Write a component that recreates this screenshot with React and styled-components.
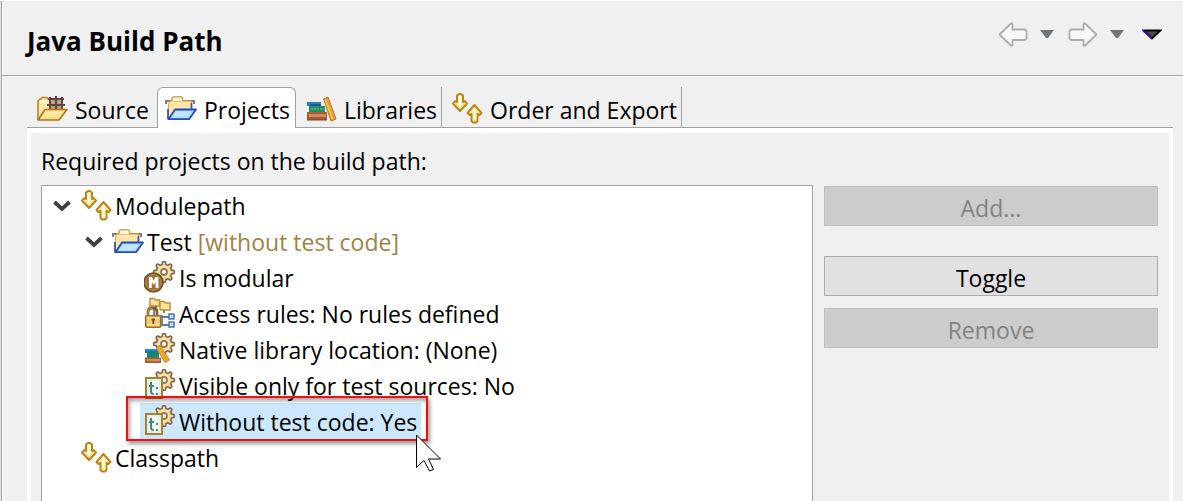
import React from "react";
import styled, { createGlobalStyle, css } from "styled-components";

const GlobalStyle = createGlobalStyle`
  * { box-sizing: border-box; }
  html, body { margin: 0; height: 100%; background: #f0f0f0; }
  #root { height: 100%; }
  body {
    overflow: hidden;
    color: #000;
    font-family: "Open Sans", "Noto Sans", sans-serif;
    font-size: 23px;
    line-height: 36px;
  }
`;

const Page = styled.div`
  display: flex;
  flex-direction: column;
  height: 100vh;
  border-top: 1px solid #fff;
  border-left: 1px solid #e3e3e3;
`;

const Inner = styled.div`
  flex: 1;
  min-height: 0;
  display: flex;
  flex-direction: column;
  border-left: 1px solid #a0a0a0;
  box-shadow: inset 1px 0 #fff;
`;

const Header = styled.header`
  display: flex;
  justify-content: space-between;
  align-items: flex-start;
  height: 76px;
  padding: 21px 21px 0 25px;
  border-bottom: 1px solid #fff;
  box-shadow: inset 0 -1px #a0a0a0;
`;

const Title = styled.h1`
  margin: 0;
  font-size: 26px;
  line-height: 38px;
  font-weight: 700;
`;

const Nav = styled.div`
  display: flex;
  align-items: flex-start;
`;

const IconButton = styled.button`
  display: block;
  padding: 0;
  border: 0;
  background: none;
  margin-left: ${(p) => p.$gap || 0}px;
  svg { display: block; }
`;

const Folder = styled.main`
  flex: 1;
  min-height: 0;
  display: flex;
  flex-direction: column;
  margin: 10px 10px 0 25px;
`;

const TabBar = styled.div`
  display: flex;
  height: 41px;
  box-shadow: inset 0 -1px #a0a0a0;
`;

const Tab = styled.button`
  display: flex;
  align-items: center;
  gap: 7px;
  padding: 5px ${(p) => (p.$plain ? 8 : 4)}px 0 9px;
  border: 0;
  border-right: 1px solid ${(p) => (p.$plain ? "transparent" : "#a0a0a0")};
  background: none;
  color: inherit;
  font: inherit;
  white-space: nowrap;
  svg { margin-top: -4px; }
  ${(p) =>
    p.$active &&
    css`
      margin-left: -1px;
      padding: 4px 5px 0 7px;
      border: 1px solid #a0a0a0;
      border-bottom: 0;
      border-radius: 6px 6px 0 0;
      background: #fff;
    `}
`;

const Panel = styled.section`
  flex: 1;
  min-height: 0;
  display: flex;
  flex-direction: column;
  border: solid #fff;
  border-width: 5px 4px 0;
  padding: 10px 11px 0 10px;
`;

const Caption = styled.p`
  margin: 0 0 6px;
  line-height: 36px;
`;

const Columns = styled.div`
  flex: 1;
  min-height: 0;
  display: grid;
  grid-template-columns: minmax(0, 1fr) 334px;
  gap: 11px;
`;

const Tree = styled.ul`
  margin: 0;
  padding: 1px 0 0;
  list-style: none;
  border: 1px solid #a0a0a0;
  border-bottom: 0;
  background: #fff;
`;

const Row = styled.li`
  display: flex;
  height: 36px;
  padding-left: ${(p) => p.$level * 32}px;
`;

const Expander = styled.span`
  width: 34px;
  padding: 13px 0 0 11px;
  svg { display: block; }
`;

const Item = styled.span`
  position: relative;
  display: flex;
  align-items: center;
  gap: 3px;
  padding: 0 4px;
  white-space: nowrap;
  background: ${(p) => (p.$selected ? "#cce8ff" : "transparent")};
`;

const Label = styled.span`
  padding-top: 2px;
`;

const Note = styled.span`
  color: #a08248;
`;

const Highlight = styled.span`
  position: absolute;
  z-index: 1;
  inset: -7px -7px -2px -14px;
  border: 2px solid #f01010;
  box-shadow: 2px 3px 4px rgba(0, 0, 0, 0.4), inset 2px 3px 4px rgba(0, 0, 0, 0.35);
`;

const Pointer = styled.svg`
  position: absolute;
  z-index: 2;
  left: calc(100% - 5px);
  top: 31px;
`;

const Actions = styled.div`
  display: flex;
  flex-direction: column;
  gap: 12px;
  padding-top: 1px;
`;

const ActionButton = styled.button`
  height: 40px;
  padding: 3px 0 0;
  margin-bottom: ${(p) => (p.$spaced ? 18 : 0)}px;
  border: 1px solid #adadad;
  border-radius: 0;
  background: #e1e1e1;
  color: #000;
  font: inherit;
  line-height: 32px;
  &:disabled {
    background: #ccc;
    border-color: #bfbfbf;
    color: #838383;
  }
`;

const Glyph = ({ children }) => (
  <svg width="32" height="32" viewBox="0 0 32 32" aria-hidden="true">
    {children}
  </svg>
);

const PathArrowsIcon = () => (
  <Glyph>
    <g fill="#ffedb0" stroke="#b98518" strokeWidth="2" strokeLinejoin="round">
      <path d="M6 3.500 L8 2 H10 L12 3.500 V10 L13.500 9 L16 11.500 L9 19 L2 11.500 L4.500 9 L6 10 Z" />
      <path d="M23.500 13 L30.500 21 L28.500 23 L26.500 22 V29 L25 30.500 H22 L20.500 29 V22 L18.500 23 L16.500 21 Z" />
    </g>
    <path d="M9 4 V15 M23.500 17 V28" stroke="#fffce8" strokeWidth="2" />
    <path d="M5 12 L9 16.500 L13 12 M25.500 20 V28" fill="none" stroke="#f3ce70" strokeWidth="1" />
  </Glyph>
);

const SourceIcon = () => (
  <Glyph>
    <path d="M2 27 V9 L4 7 H5 L6 5.500 H11 L12 7 H20 V24 Z" fill="#ffe9ad" stroke="#bd8227" strokeWidth="1.600" />
    <path d="M3.500 9.500 H11" stroke="#fff9df" strokeWidth="2" />
    <rect x="13" y="6" width="14" height="12" fill="#b8a18c" />
    <path d="M14 5 V17 M20 4 V17 M26 5 V17 M12 7 H28 M11 13 H29" stroke="#66453c" strokeWidth="2" fill="none" />
    <path d="M9 17.500 H31 L23 28 H2 Z" fill="#ffdc87" stroke="#ae741f" strokeWidth="1.600" strokeLinejoin="round" />
    <path d="M10 19.500 H27 L23 25 H6 Z" fill="#ffe7a6" />
  </Glyph>
);

const ProjectIcon = () => (
  <Glyph>
    <path d="M0 8 H30 V12 H28 V10 H2 V12 H0 Z" fill="#8d777a" />
    <path d="M3.500 26 V12 L5 9 H26.500 V20 H10 Z" fill="#ffe5a7" stroke="#d1a34f" strokeWidth="1" />
    <path d="M7 9 V6 L8.500 4.800 H16 L17.500 6 V9" fill="#fff8df" stroke="#d8a74d" strokeWidth="1.600" />
    <path d="M3 17 V27 M26.500 11 V17" stroke="#4058a9" strokeWidth="1.800" />
    <path d="M10 17.500 H31 L24 27.200 H3.500 Z" fill="#a9dcfb" stroke="#2949b5" strokeWidth="1.800" strokeLinejoin="round" />
    <path d="M11 19.500 H27 L23 25 H7 Z" fill="#bde7ff" />
  </Glyph>
);

const LibraryIcon = () => (
  <Glyph>
    <path d="M2 10 H16 V14 H2 Z" fill="#1685c5" />
    <path d="M5 13 H16" stroke="#2a4f91" strokeWidth="2" />
    <path d="M4 14 H20 V20 H4 Z" fill="#258d66" />
    <path d="M6 17 H20" stroke="#5fa98a" strokeWidth="1.500" strokeDasharray="2 1" />
    <path d="M2 20 H22 V28 H2 Z" fill="#a85c30" />
    <path d="M4 23.500 H21" stroke="#d08c5c" strokeWidth="3" />
    <path d="M2 28 H22" stroke="#75412b" />
    <path d="M18.500 7 L23 5 L31 27 L26 29 Z" fill="#e9a333" stroke="#bd762b" />
    <path d="M20.500 8 L27.500 27" stroke="#f5c262" strokeWidth="1.500" />
  </Glyph>
);

const angles = [0, 45, 90, 135, 180, 225, 270, 315];

const Gear = () => (
  <g>
    {angles.map((a) => (
      <path
        key={a}
        d="M20 8 V2.300"
        transform={`rotate(${a} 20 11)`}
        stroke="#7d6452"
        strokeWidth="5"
        strokeLinecap="round"
      />
    ))}
    <circle cx="20" cy="11" r="8.600" fill="#7d6452" />
    {angles.map((a) => (
      <path
        key={a}
        d="M20 8 V2.600"
        transform={`rotate(${a} 20 11)`}
        stroke="#f3d795"
        strokeWidth="2.200"
        strokeLinecap="round"
      />
    ))}
    <circle cx="20" cy="11" r="7" fill="#f8df9e" />
    <circle cx="20" cy="11" r="3" fill="#fffdf2" stroke="#8f7a62" strokeWidth="1.800" />
  </g>
);

const ModularIcon = () => (
  <Glyph>
    <Gear />
    <circle cx="9.500" cy="21.500" r="9.600" fill="#956124" stroke="#71501f" strokeWidth="1.400" />
    <circle cx="9.500" cy="21.500" r="7.800" fill="#a0703a" stroke="#b88c57" strokeWidth="1" />
    <path d="M5 27 V16 H8 L9.700 19.500 L11.400 16 H14.400 V27 H11.600 V21 L9.700 24 L7.800 21 V27 Z" fill="#fff" />
  </Glyph>
);

const AccessIcon = () => (
  <Glyph>
    <path d="M10 11 V20 H26 M18 18 V28 H26" fill="none" stroke="#527fb7" strokeWidth="1.800" />
    <path d="M6 8 V1.500 H10 L11.500 3 H15.500 V9 H6 Z" fill="#ffe3a0" stroke="#c38b2f" strokeWidth="1.400" />
    <path d="M16 12 V4.500 H20 L21.500 6 H26 V13 H17 Z" fill="#ffe3a0" stroke="#c38b2f" strokeWidth="1.400" />
    <path d="M12 9 V12 M20 13 V16" stroke="#7b604c" strokeWidth="1.500" />
    <rect x="25" y="17" width="5" height="5" fill="#c5dcf4" stroke="#527fb7" strokeWidth="1.600" />
    <rect x="25" y="25" width="5" height="5" fill="#c5dcf4" stroke="#527fb7" strokeWidth="1.600" />
    <path d="M4 20 V15 Q4 11 8.500 11 Q13 11 13 15 V20" fill="none" stroke="#84602f" strokeWidth="2.800" />
    <path d="M4 19 V15 Q4 11 8.500 11" fill="none" stroke="#c6a566" strokeWidth="1" />
    <rect x="1.700" y="18.700" width="15" height="11.500" rx="1" fill="#efcc78" stroke="#a66e1c" strokeWidth="1.600" />
    <path d="M3 21 H15 M3 27.500 H15" stroke="#fae7ad" />
    <path d="M7.500 22.500 H11 M9.300 22.500 V27" stroke="#765022" strokeWidth="1.800" />
  </Glyph>
);

const NativeIcon = () => (
  <Glyph>
    <Gear />
    <path d="M1 16 H14 V20 H1 Z" fill="#1675ad" />
    <path d="M2 17 H14" stroke="#35a5d9" />
    <path d="M3 20 H15 V25 H3 Z" fill="#188468" />
    <path d="M1 24.500 H17 V30 H1 Z" fill="#ae6030" />
    <path d="M3 27 H16" stroke="#d08c5c" strokeWidth="2" />
    <path d="M12 14.500 L16 12.500 L25.500 27 L21 29.500 Z" fill="#eda72f" stroke="#c98a2a" />
  </Glyph>
);

const TestCodeIcon = () => (
  <Glyph>
    <Gear />
    <rect x="2" y="9" width="16" height="20" fill="#fffdf4" stroke="#a88032" strokeWidth="2" />
    <rect x="4" y="11" width="12" height="16" fill="#f6fbf9" stroke="#cce2df" />
    <path d="M7 13 V23 Q7 25 10 25 M5 17 H10" fill="none" stroke="#3c8f6e" strokeWidth="2" />
    <path d="M12 19 H14 M12 25 H14" stroke="#3c8f6e" strokeWidth="2" />
  </Glyph>
);

const Chevron = () => (
  <svg width="18" height="12" viewBox="0 0 18 12" aria-hidden="true">
    <path d="M1.500 2 L9 9 L16.500 2" fill="none" stroke="#404040" strokeWidth="3.800" />
  </svg>
);

const HistoryArrow = ({ forward }) => (
  <svg width="30" height="26" viewBox="0 0 30 26" aria-hidden="true">
    <path
      transform={forward ? "translate(30 0) scale(-1 1)" : undefined}
      d="M1.500 12.500 L13 1.500 H14.500 V7.500 H27 L28.500 9 V16.500 L27 18 H14.500 V23.500 H13 Z"
      fill="#f8f8f8"
      stroke="#adadad"
      strokeWidth="1.800"
      strokeLinejoin="round"
    />
  </svg>
);

const Caret = () => (
  <svg width="14" height="17" viewBox="0 0 14 17" aria-hidden="true">
    <path d="M0 8 H14 L8 16 H6 Z" fill="#70767a" />
  </svg>
);

const tabs = [
  { label: "Source", Icon: SourceIcon, plain: true },
  { label: "Projects", Icon: ProjectIcon, active: true },
  { label: "Libraries", Icon: LibraryIcon },
  { label: "Order and Export", Icon: PathArrowsIcon },
];

const rows = [
  { level: 0, label: "Modulepath", Icon: PathArrowsIcon, open: true },
  { level: 1, label: "Test", note: "[without test code]", Icon: ProjectIcon, open: true },
  { level: 2, label: "Is modular", Icon: ModularIcon },
  { level: 2, label: "Access rules: No rules defined", Icon: AccessIcon },
  { level: 2, label: "Native library location: (None)", Icon: NativeIcon },
  { level: 2, label: "Visible only for test sources: No", Icon: TestCodeIcon },
  { level: 2, label: "Without test code: Yes", Icon: TestCodeIcon, selected: true },
  { level: 0, label: "Classpath", Icon: PathArrowsIcon },
];

export default function App() {
  return (
    <>
      <GlobalStyle />
      <Page>
        <Inner>
          <Header>
            <Title>Java Build Path</Title>
            <Nav>
              <IconButton aria-label="Back"><HistoryArrow /></IconButton>
              <IconButton aria-label="Back history" $gap={12}><Caret /></IconButton>
              <IconButton aria-label="Forward" $gap={14}><HistoryArrow forward /></IconButton>
              <IconButton aria-label="Forward history" $gap={12}><Caret /></IconButton>
              <IconButton aria-label="Menu" $gap={18}>
                <svg width="20" height="18" viewBox="0 0 20 18" aria-hidden="true">
                  <path d="M1.500 8.500 H18.500 L10 16.500 Z" fill="#484848" stroke="#08000c" strokeWidth="1.800" />
                  <path d="M1 8.500 L10 17" stroke="#4a10b0" strokeWidth="1.600" />
                </svg>
              </IconButton>
            </Nav>
          </Header>
          <Folder>
            <TabBar role="tablist">
              {tabs.map(({ label, Icon, active, plain }) => (
                <Tab key={label} role="tab" aria-selected={!!active} $active={active} $plain={plain}>
                  <Icon />
                  {label}
                </Tab>
              ))}
            </TabBar>
            <Panel>
              <Caption id="tree-caption">Required projects on the build path:</Caption>
              <Columns>
                <Tree role="tree" aria-labelledby="tree-caption">
                  {rows.map(({ level, label, note, Icon, open, selected }) => (
                    <Row key={label} role="treeitem" aria-level={level + 1} aria-selected={!!selected} $level={level}>
                      <Expander>{open && <Chevron />}</Expander>
                      <Item $selected={selected}>
                        <Icon />
                        <Label>
                          {label}
                          {note && <Note> {note}</Note>}
                        </Label>
                        {selected && (
                          <>
                            <Highlight />
                            <Pointer width="26" height="40" viewBox="0 0 26 40" aria-hidden="true">
                              <path
                                d="M.5 1 V33.500 L8 26.500 L13.500 37 L17.500 35.500 L12.500 25 H24.500 Z"
                                fill="#fff"
                                stroke="#000"
                              />
                            </Pointer>
                          </>
                        )}
                      </Item>
                    </Row>
                  ))}
                </Tree>
                <Actions>
                  <ActionButton disabled $spaced>Add...</ActionButton>
                  <ActionButton>Toggle</ActionButton>
                  <ActionButton disabled>Remove</ActionButton>
                </Actions>
              </Columns>
            </Panel>
          </Folder>
        </Inner>
      </Page>
    </>
  );
}
